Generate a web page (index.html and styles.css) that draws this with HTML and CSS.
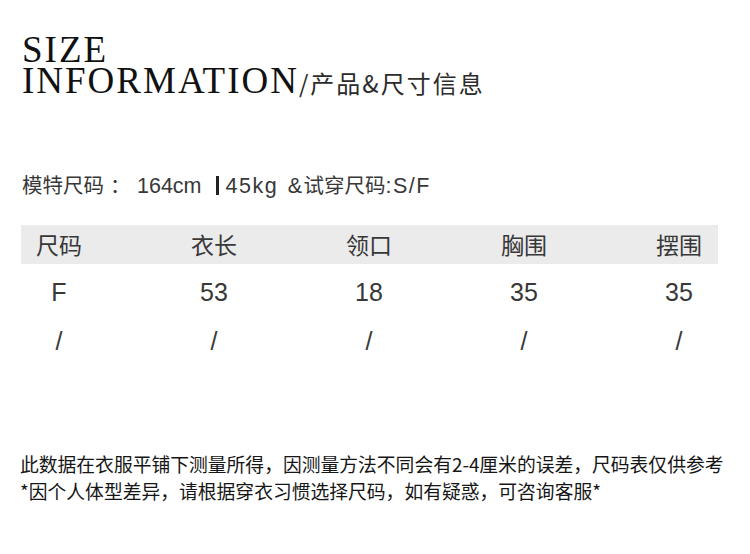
FILE: index.html
```html
<!DOCTYPE html>
<html lang="zh-CN">
<head>
<meta charset="utf-8">
<title>Size Information</title>
<link rel="stylesheet" href="styles.css">
</head>
<body>
<div class="page">
  <h1 class="title">
    <span class="title-line">SIZE</span>
    <span class="title-line">INFORMATION<span class="title-cn">/产品&amp;尺寸信息</span></span>
  </h1>

  <p class="model">模特尺码<span class="colon">：</span><span class="latin">164cm</span><span class="bar"></span><span class="latin wide">45kg &amp;</span>试穿尺码<span class="latin wide">:S/F</span></p>

  <div class="table">
    <div class="row head">
      <div class="cell">尺码</div>
      <div class="cell">衣长</div>
      <div class="cell">领口</div>
      <div class="cell">胸围</div>
      <div class="cell">摆围</div>
    </div>
    <div class="row data first">
      <div class="cell">F</div>
      <div class="cell">53</div>
      <div class="cell">18</div>
      <div class="cell">35</div>
      <div class="cell">35</div>
    </div>
    <div class="row data">
      <div class="cell">/</div>
      <div class="cell">/</div>
      <div class="cell">/</div>
      <div class="cell">/</div>
      <div class="cell">/</div>
    </div>
  </div>

  <div class="notes">
    <p>此数据在衣服平铺下测量所得，因测量方法不同会有2-4厘米的误差，尺码表仅供参考</p>
    <p>*因个人体型差异，请根据穿衣习惯选择尺码，如有疑惑，可咨询客服*</p>
  </div>
</div>
</body>
</html>
```

FILE: styles.css
```css
html, body {
  margin: 0;
  padding: 0;
  background: #ffffff;
}

.page {
  width: 750px;
  height: 554px;
  padding: 34px 0 0 21px;
  box-sizing: border-box;
  overflow: hidden;
  font-family: "Noto Sans CJK SC", "Liberation Sans", sans-serif;
  color: #333333;
}

.title {
  margin: 0 0 0 1px;
  font-family: "Liberation Serif", "Noto Sans CJK SC", serif;
  font-weight: 400;
  font-size: 37px;
  line-height: 31px;
  color: #111111;
}

.title-line {
  display: block;
  letter-spacing: 2px;
  white-space: nowrap;
}

.title-cn {
  font-family: "Noto Sans CJK SC", sans-serif;
  font-size: 24px;
  letter-spacing: 2px;
  color: #2b2b2b;
}

.model {
  margin: 71px 0 0 1px;
  font-size: 20.5px;
  line-height: 30px;
  color: #383838;
  white-space: nowrap;
}

.latin {
  font-family: "Liberation Sans", sans-serif;
  font-size: 21.5px;
}

.latin.wide {
  letter-spacing: 1.5px;
  word-spacing: 2px;
}

.colon {
  display: inline-block;
  width: 33px;
  text-indent: 6px;
}

.bar {
  display: inline-block;
  width: 3px;
  height: 19px;
  background: #222222;
  vertical-align: -2px;
  margin: 0 7px 0 14px;
}

.table {
  margin-top: 24px;
  width: 697px;
}

.row {
  display: grid;
  grid-template-columns: repeat(5, 48px);
  column-gap: 107px;
  padding-left: 14px;
  justify-items: center;
  align-items: center;
}

.head {
  height: 39px;
  background: #ebebeb;
  font-size: 23px;
  color: #383838;
}

.data {
  height: 49px;
  font-family: "Liberation Sans", sans-serif;
  font-size: 25px;
  color: #383838;
}

.data.first {
  margin-top: 4px;
}

.cell {
  white-space: nowrap;
  line-height: 1;
}

.notes {
  margin-top: 84px;
  font-size: 18.8px;
  line-height: 27px;
  color: #161616;
}

.notes p {
  margin: 0;
  white-space: nowrap;
  margin-left: -1px;
}
```
